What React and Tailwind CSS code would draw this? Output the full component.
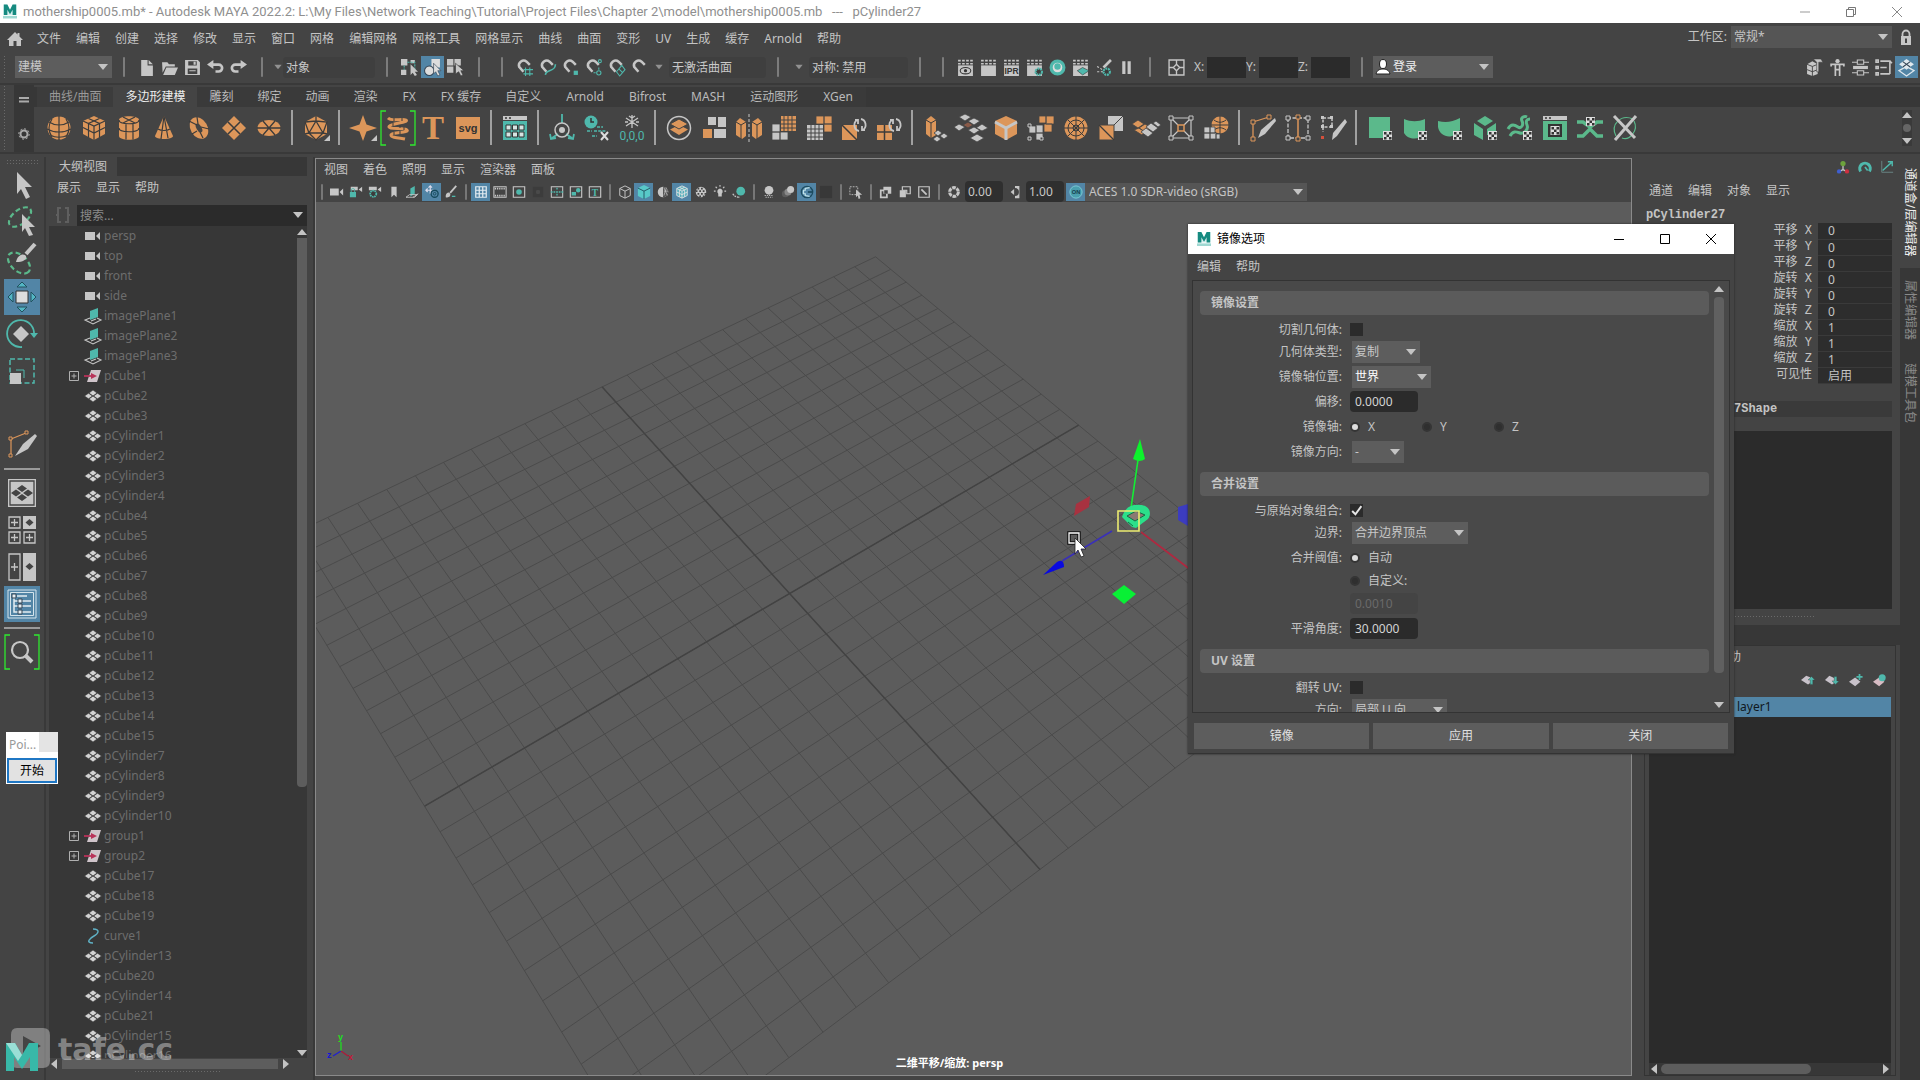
import React from "react";

const O = "#dc965a";
const T = "#4fb8ac";
const W = "#c6c6c6";
const D = "#3b3b3b";
const G = "#5bb98b";

const Magnet = () => (
  <path d="M7 12 L3 7.500 A4.500 4.500 0 0 1 10 2.500 L13 5.500" fill="none" stroke={W} strokeWidth="2.400" />
);
const Clap = () => (
  <>
    <path d="M1 6h14v10H1z" fill={W} />
    <path d="M1 1.500h14M1 4.500h14" stroke={W} strokeWidth="1.500" strokeDasharray="2.500 1.300" />
  </>
);
const Checker = ({ x = 15, y = 15 }) => (
  <g>
    <path d={`M${x} ${y}h9v9h-9z`} fill="#ddd" />
    <path d={`M${x + 1} ${y + 1}h2.500v2.500h-2.500zM${x + 6} ${y + 1}h2.500v2.500h-2.500zM${x + 3.5} ${y + 3.5}h2.500v2.500h-2.500zM${x + 1} ${y + 6}h2.500v2.500h-2.500zM${x + 6} ${y + 6}h2.500v2.500h-2.500z`} fill="#333" />
  </g>
);
const Gear = ({ x, y, r = 3 }) => (
  <circle cx={x} cy={y} r={r} fill={D} stroke={T} strokeWidth="2" strokeDasharray="1.800 .7" />
);

/* 16-unit icons */
const small = {
  home: <path d="M8 1 L0 9h2v6h4.500v-5h3v5H14V9h2L12.500 5.500V2h-2v1.600z" fill={W} />,
  file: <path d="M3 1h6v5h5v10H3zM10 1l4 4h-4z" fill={W} />,
  open: <path d="M1 3h5l1.500 2H13v2H4.500L1.500 13zM5 8h11l-3 7H2z" fill={W} />,
  save: <path fillRule="evenodd" d="M1 1h12l2 2v12H1zM4 2v4h8V2zM3.500 9v5h9V9zM9 2.500h2v3H9zM5 10.500h6v1H5z" fill={W} />,
  undo: <path d="M6 1v3h5a4.500 4.500 0 0 1 0 9H8v-2.500h3a2 2 0 0 0 0-4H6v3L0 5.200z" fill={W} />,
  redo: <path d="M10 1v3H5a4.500 4.500 0 0 0 0 9h3v-2.500H5a2 2 0 0 1 0-4h5v3l6-4.300z" fill={W} />,
  selH: (<><path d="M0 0h6v6H0zM0 10h5v5H0zM9 1h4v3H9z" fill={W} /><path d="M6 3h7v8M3 6v4" stroke={T} strokeDasharray="2 1" fill="none" /><path d="M9 5l7 7h-3l2 3-2 1-2-3-2 2z" fill={W} /></>),
  selO: (<><path d="M7 0h8v8H7z" fill="#ddd" /><circle cx="5" cy="11" r="4.500" fill="#ddd" stroke="#345" /><path d="M9 4l7 7h-3l2 4-2 1-2-4-2 2z" fill="#ddd" stroke="#345" strokeWidth=".6" /></>),
  selC: (<><path d="M0 0h6v6H0zM7 0h6v6H7zM0 7h6v6H0z" fill={W} /><path d="M8 4l8 7h-3l2 4-2 1-2-4-3 2z" fill={W} stroke={D} strokeWidth=".6" /></>),
  mGrid: (<><Magnet /><path d="M9 8v8M13 8v8M7 10h9M7 14h9" stroke={T} /></>),
  mCurve: (<><Magnet /><path d="M6 15c1-6 9-2 9.500-10" stroke={T} strokeWidth="1.500" fill="none" /></>),
  mPoint: (<><Magnet /><path d="M11 11h4v4h-4z" fill={T} /></>),
  mProj: (<><Magnet /><circle cx="14" cy="2" r="1.400" fill="none" stroke={T} /><circle cx="13" cy="13" r="2" fill="none" stroke={T} /><path d="M8 13h2M13 8v2" stroke={T} /></>),
  mPlane: (<><Magnet /><path d="M8 12l5-6 3 4-5 6zM10 9l4 4" stroke={T} fill="none" /></>),
  mLive: <Magnet />,
  rView: (<><Clap /><ellipse cx="8" cy="11" rx="5" ry="3" fill="none" stroke="#333" /><circle cx="8" cy="11" r="1.500" fill="#333" /></>),
  rPlain: <Clap />,
  rIpr: (<><Clap /><text x="8" y="14" fontSize="8" fontWeight="bold" textAnchor="middle" fill="#333" fontFamily="Liberation Sans, sans-serif">IPR</text></>),
  rSet: (<><Clap /><Gear x={12} y={12} /></>),
  rHyp: (<><circle cx="8" cy="8" r="6" fill="#ddd" stroke={T} strokeWidth="3" /><circle cx="8" cy="7" r="3" fill={T} /></>),
  rLay: (<><Clap /><path d="M5 11l5-3 6 3-6 4z" fill={T} stroke={D} strokeWidth=".6" /></>),
  rLight: (<><path d="M15 1L8 8" stroke={W} strokeWidth="2.500" /><path d="M2 7l10 6M2 12h8" stroke={W} strokeDasharray="2 1.500" /><Gear x={11} y={12} /></>),
  pause: <path d="M4 2h3v12H4zM9 2h3v12H9z" fill={W} />,
  snap: <path d="M1 1h14v14H1zM8 1v5M8 10v5M1 8h5M10 8h5M8 5l3 3-3 3-3-3z" fill="none" stroke={W} strokeWidth="1.300" />,
  kit: (<><path d="M1 5l5-3 5 3v9l-5 2-5-2z" fill={W} /><path d="M1 5l5 2 5-2M6 7v9M1 10l5 2 5-2" stroke={D} fill="none" strokeWidth=".8" /><path d="M7 0h7l2 3h-4v9h-2V3z" fill={W} stroke={D} strokeWidth=".5" /></>),
  human: (<><circle cx="8" cy="2" r="2" fill={W} /><path d="M2 7V5h12v2M6 5v5h4V5M6 10v6M10 10v6" stroke={W} fill="none" strokeWidth="1.600" /></>),
  attr: (<><path d="M0 3h5M11 3h5M0 13h5M11 13h5" stroke={W} /><path d="M5 1h6v4H5zM5 11h6v4H5z" fill="none" stroke={W} /><path d="M1 6.500h14v3H1z" fill={W} /></>),
  tool: <path d="M1 1h2v2H1zM1 7h2v2H1zM1 13h2v2H1zM5 2h9v12M5 8h6M5 14h9M8 2h6l2 2" fill="none" stroke={W} strokeWidth="1.500" />,
  chan: (<><path d="M8 7l7 4-7 5-7-5z" fill="none" stroke="#dfe8ee" strokeWidth="1.300" /><path d="M8 0l7 5-7 5-7-5z" fill="#dfe8ee" /><path d="M4.500 2.500l7 5M11.500 2.500l-7 5" stroke="#345" /></>),
  lock: (<><path d="M4.500 8V5a3.500 3.500 0 0 1 7 0v3" fill="none" stroke={W} strokeWidth="1.800" /><path fillRule="evenodd" d="M3 7h10v9H3zM7 9.500h2V14H7z" fill={W} /></>),
  cam: <path d="M0 4h10v8H0zM11 8l4-4v8z" fill={W} />,
  camL: (<><path d="M2 2h8v4H2zM11 5l4-3v6z" fill={W} /><path d="M1 8h7v6H1z" fill={T} /><path d="M2.500 8V6a2 2 0 0 1 4 0v2" stroke={T} fill="none" /></>),
  camA: (<><path d="M1 2h9v4H1zM11 5l4-3v6z" fill={W} /><Gear x={6} y={10} r={3.5} /></>),
  book: <path d="M5 2h6v12l-3-3-3 3z" fill={W} />,
  img: (<><path d="M5 4l5-3v9l-5 3z" fill={T} /><path d="M0 14l4-3h9l-3 3zM8 14l6-4" stroke={W} fill="none" /></>),
  pan: (<><path d="M6 1v9M1 6h11M4 3l2-2 2 2M3 4L1 6l2 2" stroke="#dde" fill="none" strokeWidth="1.300" /><circle cx="11" cy="10" r="4" fill="none" stroke="#164a5c" strokeWidth="1.500" /><circle cx="11" cy="10" r="1.500" fill="none" stroke="#164a5c" /></>),
  brush: (<><path d="M14 1L7 9" stroke={W} strokeWidth="2" /><path d="M2 12c1-4 4-4 5-2s-1 5-5 4z" fill={W} /><path d="M9 13h4" stroke={T} strokeWidth="1.500" /></>),
  grid: <path d="M2 2h12v12H2zM2 6h12M2 10h12M6 2v12M10 2v12" fill="none" stroke="#e4ecf2" strokeWidth="1.400" />,
  film: (<><path d="M1 2h14v12H1z" fill="none" stroke={W} strokeWidth="1.200" /><path d="M2 4h12M2 12h12" stroke={W} strokeWidth="2" strokeDasharray="1.500 1" /></>),
  gate: (<><path d="M1.500 2h13v12h-13z" fill="none" stroke={W} strokeWidth="1.300" /><circle cx="8" cy="8" r="3.200" fill={T} /></>),
  dim: (<><path d="M2 2h12v12H2z" fill="#3c3c3c" /><circle cx="8" cy="8" r="2.500" fill="#4a4a4a" /></>),
  chart: (<><path d="M1.500 2h13v12h-13z" fill="none" stroke={W} strokeWidth="1.200" /><path d="M1 8h14M8 3v3M8 10v3" stroke={T} strokeDasharray="2 1" strokeWidth="1.500" /></>),
  safeA: (<><path d="M1.500 2h13v12h-13z" fill="none" stroke={W} strokeWidth="1.300" /><path d="M3 8h5v4H3z" fill={T} /><circle cx="10.500" cy="6" r="2.500" fill={T} /></>),
  safeT: (<><path d="M1.500 2h13v12h-13z" fill="none" stroke={W} strokeWidth="1.300" /><text x="8" y="12" fontSize="11" fontWeight="bold" textAnchor="middle" fill={T} fontFamily="Liberation Serif, serif">T</text></>),
  wire: <path d="M8 1l6 3v8l-6 3-6-3V4zM2 4l6 3 6-3M8 7v8" fill="none" stroke={W} strokeWidth="1.100" />,
  shade: (<><path d="M8 0l7 3.500v9L8 16l-7-3.500v-9z" fill="#58c8c8" /><path d="M1 3.500l7 3.500 7-3.500M8 7v9" fill="none" stroke="#1f4a5a" /></>),
  half: (<><circle cx="8" cy="8" r="6" fill={W} /><path d="M8 2a6 6 0 0 1 0 12z" fill="#555" /><path d="M9 3l4 9M12 3l-3 9M9 7h5" stroke={W} strokeWidth=".8" /></>),
  wos: (<><path d="M8 1l6 3v8l-6 3-6-3V4z" fill="#53aebb" /><path d="M8 1l6 3v8l-6 3-6-3V4zM2 4l6 3 6-3M8 7v8M5 2.500l6 3v8M11 2.500l-6 3v8M2 8l6 3 6-3" fill="none" stroke="#e2e2e2" /></>),
  check: (<><circle cx="8" cy="8" r="6" fill={W} /><path d="M4 3h2v2H4zM8 3h2v2H8zM2 6h2v2H2zM6 6h2v2H6zM10 6h2v2h-2zM4 9h2v2H4zM8 9h2v2H8zM12 9h2v2h-2zM6 12h2v2H6zM10 12h2v2h-2z" fill="#444" /></>),
  bulb: (<><path d="M8 4a3.500 3.500 0 0 1 2 6v3H6v-3a3.500 3.500 0 0 1 2-6z" fill={W} /><path d="M8 0v2M1 7h2M13 7h2M3 2l1.500 1.500M13 2l-1.500 1.500" stroke={W} strokeWidth="1.300" /></>),
  shad: (<><circle cx="10" cy="7" r="5" fill={T} /><path d="M1 10c2 4 6 4 8 4" stroke={W} strokeWidth="1.500" strokeDasharray="2 1" fill="none" /></>),
  ao: (<><circle cx="8" cy="6" r="5" fill={W} /><path d="M3 12h10M4 14h8" stroke={W} strokeDasharray="1.500 1" /></>),
  blur: (<><circle cx="5" cy="10" r="4" fill="#5c5c5c" /><circle cx="8" cy="8" r="4" fill="#888" /><circle cx="11" cy="5" r="4" fill={W} /></>),
  msaa: (<><circle cx="8" cy="8" r="6.500" fill="none" stroke="#1d4c60" strokeWidth="1.500" /><path d="M11 3L6 4v2H4v4h2v2l5 1" fill="none" stroke="#bfe3ea" strokeWidth="1.400" /><path d="M9 8h5" stroke="#1d4c60" strokeWidth="2" /></>),
  dark: <path d="M1 1h14v14H1z" fill="#383838" />,
  iso: (<><path d="M1 2h9v9H1z" fill="none" stroke={W} strokeDasharray="2 1.300" /><path d="M8 5l7 6h-3l1 4-2 1-1-4-2 2z" fill={W} /></>),
  x1: (<><path d="M5 2h9v8H5z" fill={W} /><path d="M2 6h7v8H2z" fill="none" stroke={W} strokeWidth="2" /><path d="M6 6h4v4H6z" fill="#444" /></>),
  x2: (<><path d="M5 2h9v8h-4V6H5z" fill="none" stroke={W} strokeWidth="1.400" /><path d="M2 6h7v8H2z" fill={W} /></>),
  x3: (<><path d="M2 2h12v12H2z" fill="none" stroke={W} strokeWidth="1.400" /><path d="M5 5l6 6" stroke={W} strokeWidth="2" /></>),
  expo: (<><circle cx="8" cy="8" r="5" fill="none" stroke={W} strokeWidth="3.500" strokeDasharray="4.200 1" /></>),
  gam: (<><path d="M8 1h5v14H8v-2.500a4.500 4.500 0 0 0 0-9zM3 8l4-3.500v7z" fill={W} /></>),
  on: (<><circle cx="8" cy="8" r="7" fill="#4a9fae" stroke="#7ed0d8" /><text x="8" y="10.500" fontSize="6.500" fontWeight="bold" textAnchor="middle" fill="#153c4a" fontFamily="Liberation Sans, sans-serif">ON</text></>),
  manip: (<><path d="M8 6v5M8 11l-4 2M8 11l4 2" stroke={W} strokeWidth="1.500" /><circle cx="8" cy="4" r="3" fill="#6da23c" /><circle cx="3.500" cy="13" r="2.500" fill="#3f5fd0" /><circle cx="12.500" cy="13" r="2.500" fill="#cc3040" /></>),
  speed: (<><path d="M3 13a6 6 0 1 1 10 0" fill="none" stroke={T} strokeWidth="3.500" /><path d="M8 8l3 4" stroke={T} strokeWidth="2" /></>),
  hyper: (<><path d="M2 1v13h13" stroke="#6d8a8a" fill="none" /><path d="M3 12L13 3M9 2h5v5" stroke={T} strokeWidth="1.600" fill="none" /></>),
  lUp: (<><path d="M0 8l6-5 5 2v6l-3 2z" fill="#c8c2ca" /><path d="M12 4l4 4h-2.500v5h-3V8H8z" fill={T} stroke={D} strokeWidth=".4" /></>),
  lDn: (<><path d="M0 8l5-5 6 3v5l-3 2z" fill="#c8c2ca" /><path d="M12 13l4-4h-2.500V4h-3v5H8z" fill={T} stroke={D} strokeWidth=".4" /></>),
  lNew: (<><path d="M0 10l7-5 6 5-6 5z" fill="#c8c2ca" /><path d="M12 1v7M8.500 4.500h7" stroke={T} strokeWidth="2" /></>),
  lSel: (<><path d="M0 10l7-5 6 5-6 5z" fill="#d8bcc4" /><circle cx="10.500" cy="5.500" r="4" fill={T} /></>),
  mesh: (<><path d="M8 2l4 3-4 3-4-3zM8 8l4 3-4 3-4-3zM3.500 5.200L7.500 8l-4 2.800L-.5 8zM12.500 5.200l4 2.800-4 2.800-4-2.800z" fill="#d2d2d2" stroke="#373737" strokeWidth=".6" /></>),
  plane: (<><path d="M5 3l8-3v9l-8 3z" fill={T} /><path d="M5 10l-5 2 8 4 8-4-4-2M6 13l5-2" stroke={W} fill="none" strokeWidth="1.100" /></>),
  group: (<><path d="M6 2h10l-4 12H2z" fill="#cfc4ca" /><path d="M-1 8h8" stroke="#b8335a" strokeWidth="1.800" /><path d="M6 5l6 3-6 3z" fill="#b8335a" /></>),
  curve: <path d="M8 1c8 0 5 5 1 7S0 15 8 15" fill="none" stroke="#5fb0c4" strokeWidth="1.500" />,
};

const Sq = ({ d, f = W }) => <path d={d} fill={f} stroke="#444" strokeWidth=".8" />;
const Cycle = () => (
  <path d="M17 15a5.500 6 0 0 1-2-11M19 3a5.500 6 0 0 1 2 11M13 4h3v4M23 14h-3v-4" fill="none" stroke={W} strokeWidth="1.800" />
);

/* 24-unit shelf icons */
const shelf = {
  sphere: (<><circle cx="12" cy="12" r="11.500" fill={O} /><path d="M12 0v24M5 3c-4 6-4 12 0 18M19 3c4 6 4 12 0 18M2 6c6 4 14 4 20 0M0 13c7 4 17 4 24 0M3 19c6 3 12 3 18 0" fill="none" stroke={D} strokeWidth="1.200" /></>),
  cube: (<><path d="M12 0l11 5v13l-11 6L1 18V5z" fill={O} /><path d="M1 5l11 5 11-5M12 10v14M1 11.500L12 17l11-5.500M6.500 2.500l11 5v14M17.500 2.500l-11 5v14" fill="none" stroke={D} strokeWidth="1.200" /></>),
  cyl: (<><path d="M2 4c0-5 20-5 20 0v16c0 5-20 5-20 0z" fill={O} /><path d="M2 4c0 5 20 5 20 0M2 12c0 5 20 5 20 0M9 7.500v16M16 7.500v16M6 1l12 6M18 1L6 7" fill="none" stroke={D} strokeWidth="1.200" /></>),
  cone: (<><path d="M12 0l9 20c0 4-18 4-18 0z" fill={O} /><path d="M12 0l-3 23M12 0l4 22M6 13c3 2 9 2 12 0" fill="none" stroke={D} strokeWidth="1.200" /></>),
  torus: (<><ellipse cx="12" cy="12" rx="8.500" ry="11.500" fill={O} transform="rotate(-30 12 12)" /><ellipse cx="12" cy="12" rx="2.500" ry="5" fill="#444" transform="rotate(-30 12 12)" /><path d="M2 5l8 4M5 18l5-3M16 22l-3-6M22 13l-8-2M10 1l1 7" stroke={D} strokeWidth="1.200" /></>),
  plane: (<><path d="M12 0l12 12-12 12L0 12z" fill={O} /><path d="M6 6l12 12M18 6L6 18" stroke={D} strokeWidth="1.500" /></>),
  disc: (<><ellipse cx="12" cy="12" rx="11.500" ry="8" fill={O} /><path d="M0 12h24M6 5l12 14M18 5L6 19" stroke={D} strokeWidth="1.300" /></>),
  plato: (<><path d="M12 0l11 6v12l-11 6L1 18V6z" fill={O} /><path d="M12 0v5M12 5l7 12H5zM1 6l11-1 11 1-4 11 4 1M1 6l4 11-4 1M5 17l7 7 7-7" fill="none" stroke={D} strokeWidth="1.300" /><path d="M26 19v6h-6z" fill={W} /></>),
  star: (<><path d="M12-1l3.500 9.500L26 12l-10.500 3.500L12 25l-3.500-9.500L-2 12l10.500-3.500z" fill={O} /><path d="M26 19v6h-6z" fill={W} /></>),
  helix: (<><path d="M2 2c4 4 14 0 18 2S2 8 3 11s15 0 18 3-16 2-16 5 10 3 14 4" fill="none" stroke={O} strokeWidth="3" /><path d="M8 2v3M16 2v3M7 7v3M14 9v3M18 11v3M8 16v3M14 15v3" stroke={D} /><path d="M0-5h-5v34h5M24-5h5v34h-5" fill="none" stroke="#2fe82f" strokeWidth="1.300" /></>),
  type: <text x="12" y="23" fontSize="33" fontWeight="bold" textAnchor="middle" fill={O} fontFamily="Liberation Serif, serif">T</text>,
  svg: (<><path d="M0 1h24v22H0z" fill={O} /><text x="12" y="16" fontSize="11" fontWeight="bold" textAnchor="middle" fill="#333" fontFamily="Liberation Sans, sans-serif">svg</text></>),
  table: (<><path d="M0 0h24v4H0z" fill={W} /><path d="M2 2h2M6 2h2" stroke="#333" strokeWidth="1.500" /><path d="M0 5h24v19H0z" fill={T} /><path d="M3 9h5v5H3zM9.500 9h5v5h-5zM16 9h5v5h-5zM3 16h5v5H3zM9.500 16h5v5h-5zM16 16h5v5h-5z" fill="#d6e4e2" stroke="#333" strokeWidth="1" /></>),
  pivot: (<><path d="M12-2v9M8 18l-6 4M16 18l6 4M0 18l1 5 5-1M24 18l-1 5-5-1" stroke={T} strokeWidth="1.800" fill="none" /><circle cx="12" cy="14" r="7" fill="none" stroke={W} strokeWidth="1.500" /><circle cx="12" cy="14" r="3" fill={W} /></>),
  hist: (<><circle cx="6" cy="6" r="6.500" fill={T} /><path d="M6 2v4h3" stroke="#333" strokeWidth="1.500" fill="none" /><path d="M9 15h12M2 15h5M12 11h6M7 20h5" stroke={T} strokeWidth="1.500" strokeDasharray="3 1.200" /><path d="M16 16l7 8M23 16l-7 8" stroke="#ddd" strokeWidth="2" /></>),
  freeze: (<><path d="M12-1v13M6 2l12 8M18 2L6 10M9 0l3 2 3-2M5 6h3M16 6h3" stroke={W} strokeWidth="1.300" fill="none" /><text x="12" y="24" fontSize="12" textAnchor="middle" fill={T} fontFamily="Roboto, sans-serif">0,0,0</text></>),
  combine: (<><circle cx="12" cy="12" r="11.500" fill="none" stroke={W} strokeWidth="1.500" /><path d="M12 9l9 4.500-9 5.500-9-5.500z" fill={O} /><path d="M12 3l9 5-9 5-9-5z" fill={O} stroke="#444" /></>),
  separate: (<><path d="M6 1h8v8H6zM16 1h8v10h-8zM12 13h12v9H12z" fill={W} /><path d="M1 13h9v9H1z" fill={O} /></>),
  mirror: (<><path d="M-1 6l4-4 6 4v14l-4 3-6-4zM25 6l-4-4-6 4v14l4 3 6-4z" fill={O} /><path d="M-1 6l5 3 5-3M4 9v14M25 6l-5 3-5-3M20 9v14" stroke={D} fill="none" /><path d="M12-2v28" stroke={W} strokeDasharray="3 2" /></>),
  fill1: (<><path d="M9 0h15v15H9z" fill={O} /><path d="M12 0v15M16 0v15M20 0v15M9 4h15M9 8h15M9 12h15" stroke="#444" /><Sq d="M0 8h8v8H0zM0 16h8v8H0zM8 16h8v8H8z" /></>),
  fill2: (<><Sq f={O} d="M9 0h8v8H9zM17 0h8v8h-8zM17 8h8v8h-8z" /><path d="M0 9h16v15H0z" fill={W} /><path d="M4 9v15M8 9v15M12 9v15M0 13h16M0 17h16M0 21h16" stroke="#444" /></>),
  spin: (<><path d="M0 9h15v15H0z" fill={O} /><path d="M0 9l15 15" stroke={D} strokeWidth="1.500" /><Cycle /></>),
  conn: (<><path d="M0 9h15v15H0z" fill={O} /><path d="M7.500 9v15M0 16h15" stroke={D} strokeWidth="1.500" /><Cycle /></>),
  extr: (<><path d="M2 4l5-4 5 4v15l-5 3-5-4z" fill={O} /><path d="M2 4l5 3 5-3M7 7v15" stroke={D} fill="none" /><Sq d="M14 14l4 3-4 3-4-3zM20 17l4 3-4 3-4-3zM13 20l4 3-4 3-4-3z" /></>),
  bridge: (<><Sq d="M6-2l6 3-6 4-6-4zM0 8l6 3-6 4-5-4zM15 2l6 3-6 4-6-4zM15 11l6 3-6 4-6-4zM23 8l6 4-6 3-6-3zM18 18l7 4-7 4-7-4z" /><Sq f="#8a5a48" d="M9 6l5 3-5 3-5-3z" /></>),
  bevel: (<><path d="M12 0l11 5v13l-11 6L1 18V5z" fill={O} /><path d="M1 6l11 6 11-6M12 12v12" stroke={W} strokeWidth="3" fill="none" /></>),
  collapse: (<><Sq f={O} d="M10 0h7v7h-7zM17 0h8v8h-8zM15 8h8v8h-8z" /><Sq d="M0 10h7v7H0zM7 9h7v8H7zM7 17h7v7H7z" /><path d="M-1 8h3v3h-3zM-1 21h3v3h-3zM11 21h3v3h-3z" fill="#444" stroke={W} /></>),
  circ: (<><circle cx="12" cy="12" r="11.500" fill={O} /><circle cx="12" cy="12" r="8" fill="none" stroke={D} /><circle cx="12" cy="12" r="3" fill="none" stroke={D} /><path d="M12 0v24M0 12h24M4 4l16 16M20 4L4 20" stroke={D} /></>),
  extract: (<><path d="M9 0h15v15H9z" fill={W} /><path d="M9 15L24 0" stroke="#444" /><path d="M0 9h15v15H0z" fill={O} stroke="#444" /><path d="M0 9l15 15" stroke={D} strokeWidth="1.300" /></>),
  detach: (<><Sq f={O} d="M4 4l6 4-6 4-6-4zM11 8l6 4-6 4-6-4zM5 12l6 4-3 3-8-5z" /><Sq d="M17 7l7 5-5 4-7-5zM12 12l7 5-5 4-7-5zM22 5l5 4-3 2-5-4z" /></>),
  lattice: (<><path d="M2 2h20v20H2zM2 2l7 7M22 2l-7 7M2 22l7-7M22 22l-7-7" fill="none" stroke={W} strokeWidth="1.200" /><path d="M9 9h6v6H9z" fill="none" stroke={O} strokeWidth="1.500" /><path d="M0 0h4v4H0zM20 0h4v4h-4zM0 20h4v4H0zM20 20h4v4h-4z" fill="#444" stroke={W} /></>),
  smooth: (<><circle cx="16" cy="9" r="8.500" fill={O} /><path d="M16 0v18M7 9h18M10 4c4 3 8 3 12 0M10 14c4-3 8-3 12 0" stroke={D} fill="none" /><Sq d="M0 11h6v6H0zM0 17h6v6H0zM6 17h6v6H6zM6 11h5v6H6zM12 18h4v5h-4z" /></>),
  cut: (<><path d="M2 6L18 1M2 6v16" stroke={O} strokeWidth="1.300" /><path d="M24 2l1 3L14 18l-7 4 3-8z" fill={W} /><path d="M0 4h4v4H0zM16-1h4v4h-4zM0 21h4v4H0z" fill="#444" stroke={O} /></>),
  loop: (<><path d="M2 2v20h20V2z" fill="none" stroke={W} strokeDasharray="4 1.500" strokeWidth="1.300" /><path d="M12 2v20" stroke={O} strokeWidth="1.500" /><path d="M0 0h4v4H0zM20 0h4v4h-4zM0 20h4v4H0zM20 20h4v4h-4z" fill="#444" stroke={W} /><path d="M10-1h4v4h-4zM10 21h4v4h-4z" fill="#444" stroke={O} /></>),
  quad: (<><path d="M2 2h9v9H2zM2 11v5" fill="none" stroke={W} strokeDasharray="3 1.500" strokeWidth="1.500" /><path d="M0 0h3v3H0zM9 0h3v3H9zM9 9h3v3H9zM0 9h3v3H0z" fill={W} /><path d="M0 20h3v3H0z" fill="#d4503c" /><path d="M24 3l2 3-10 14-5 4 1-7z" fill={W} /></>),
  uv1: (<><path d="M1 1h21v21H1z" fill={G} /><Checker /></>),
  uv2: (<><path d="M1 3c7 3 14 3 21 0v16c-7 5-17 5-21-2z" fill={G} /><Checker /></>),
  uv3: (<><path d="M0 5c8 2 14 1 22-3v12c-6 10-20 8-22-3z" fill={G} /><Checker /></>),
  uv4: (<><path d="M12 0l8 5-8 5-8-5zM1 7l9 6v11l-9-5zM23 7l-9 6v6h9z" fill={G} /><Checker /></>),
  uv5: (<><path d="M0 13c3-6 7-4 10-2s6-2 4-6 3-5 5-4M2 20c3-6 7-4 10-3s9-3 7-8 1-6 3-6" fill="none" stroke={G} strokeWidth="3" /><Checker /></>),
  uv6: (<><path d="M0 0h24v4H0z" fill={W} /><path d="M2 2h2M6 2h2" stroke="#333" strokeWidth="1.500" /><path d="M0 5h24v19H0z" fill={G} /><path d="M5 8h14v13H5z" fill="#333" /><Checker x={7.5} y={10} /></>),
  uv7: (<><path d="M-1 6h6l7 5 7-5h6M-1 20h6l7-7 7 7h6" fill="none" stroke={G} strokeWidth="3.500" /><Checker x={8} y={1} /></>),
  uv8: (<><path d="M3 20C-3 8 8-2 20 3M21 5c5 10-5 20-12 17" fill="none" stroke={G} strokeWidth="1.200" /><path d="M1 0l21 22M23 0L2 24" stroke={W} strokeWidth="3" /></>),
};

const Tri = ({ dir = "down", className = "" }) => {
  const d = { down: "M0 2h10L5 8z", up: "M0 8h10L5 2z", left: "M8 0v10L2 5z", right: "M2 0v10l6-5z" }[dir];
  return (
    <svg viewBox="0 0 10 10" className={`h-2.5 w-2.5 shrink-0 ${className}`} aria-hidden="true">
      <path d={d} fill="#c4c4c4" />
    </svg>
  );
};

const I16 = ({ n, className = "h-4 w-4" }) => (
  <svg viewBox="0 0 16 16" className={`shrink-0 overflow-visible ${className}`} aria-hidden="true">{small[n]}</svg>
);

const Maya = ({ className }) => (
  <svg viewBox="0 0 16 16" className={className} aria-hidden="true">
    <path d="M0 0h5l3 7 3-7h5v12H0z" fill="#d7efee" />
    <path d="M1 0h4l3 6 3-6h4v12h-4V6l-3 5-3-5v6H1z" fill="#168a80" />
    <path d="M0 13h16v3H0z" fill="#9fd8d2" />
  </svg>
);

const Sel = ({ options, label, className = "", text = "text-[#c8c8c8]" }) => (
  <div className={`relative flex h-[22px] shrink-0 items-center bg-[#5d5d5d] ${className}`}>
    <select aria-label={label} className={`h-full w-full appearance-none bg-transparent pl-[3px] text-xs outline-none ${text}`}>
      {options.map((o) => <option key={o}>{o}</option>)}
    </select>
    <div className="pointer-events-none absolute right-1 flex h-full items-center">
      <Tri />
    </div>
  </div>
);

const StatusBtn = ({ n, on }) => (
  <button aria-label={n} className={`flex h-[22px] w-[23px] shrink-0 items-center justify-center ${on ? "bg-[#5285a6]" : ""}`}>
    <I16 n={n} className="h-[17px] w-[17px]" />
  </button>
);
const StatusSep = () => (
  <div className="flex w-[23px] shrink-0 justify-center"><div className="h-5 w-0.5 rounded-full bg-[#7c7c7c]" /></div>
);
const MiniTri = ({ className }) => (
  <div className={`flex shrink-0 justify-center ${className}`}><Tri className="scale-75 opacity-60" /></div>
);
const Field = ({ v = "", label, className = "" }) => (
  <input aria-label={label} defaultValue={v} className={`h-[21px] min-w-0 shrink-0 rounded-sm px-[3px] text-xs text-[#c8c8c8] outline-none ${className}`} />
);

const Title = () => (
  <header className="flex h-[23px] shrink-0 items-center bg-white text-[#8f8f8f]">
    <Maya className="ml-[3px] h-[15px] w-[14px]" />
    <h1 className="ml-1.5 whitespace-pre font-['Roboto','Noto_Sans',sans-serif] text-[13px] leading-[23px]">
      {"mothership0005.mb* - Autodesk MAYA 2022.2: L:\\My Files\\Network Teaching\\Tutorial\\Project Files\\Chapter 2\\model\\mothership0005.mb   ---   pCylinder27"}
    </h1>
    <div className="ml-auto flex h-full">
      <button aria-label="最小化" className="flex w-[46px] items-center justify-center"><svg viewBox="0 0 10 10" className="h-2.5 w-2.5"><path d="M0 5h10" stroke="#999" /></svg></button>
      <button aria-label="还原" className="flex w-[46px] items-center justify-center"><svg viewBox="0 0 10 10" className="h-2.5 w-2.5"><path d="M.5 2.500h7v7h-7zM2.500 2.500v-2h7v7h-2" fill="none" stroke="#777" /></svg></button>
      <button aria-label="关闭窗口" className="flex w-[46px] items-center justify-center"><svg viewBox="0 0 10 10" className="h-2.5 w-2.5"><path d="M0 0l10 10M10 0L0 10" stroke="#888" /></svg></button>
    </div>
  </header>
);

const MENUS = ["文件", "编辑", "创建", "选择", "修改", "显示", "窗口", "网格", "编辑网格", "网格工具", "网格显示", "曲线", "曲面", "变形", "UV", "生成", "缓存", "Arnold", "帮助"];
const MenuBar = () => (
  <nav className="flex h-[31px] shrink-0 items-center gap-[15px] pl-[7px]">
    <button aria-label="主页" className="-mr-[1px]"><I16 n="home" /></button>
    {MENUS.map((m) => <button key={m} className="shrink-0 text-xs">{m}</button>)}
    <div className="ml-auto flex items-center pr-1.5 pb-1">
      <label className="mr-1 text-xs" htmlFor="ws">工作区:</label>
      <div className="relative flex h-[22px] w-[161px] items-center bg-[#555]">
        <select id="ws" className="h-full w-full appearance-none bg-transparent pl-[3px] text-xs outline-none"><option>常规*</option></select>
        <Tri className="pointer-events-none absolute right-1" />
      </div>
      <button aria-label="锁定" className="ml-1.5"><I16 n="lock" /></button>
    </div>
  </nav>
);

const Grip = ({ className }) => (
  <div className={`shrink-0 bg-[radial-gradient(#6a6a6a_1px,transparent_1px)] bg-[size:3px_3px] ${className}`} />
);

const StatusLine = () => (
  <div className="flex h-[26px] shrink-0 items-center">
    <Grip className="ml-[3px] mr-2 h-6 w-1" />
    <Sel label="菜单集" options={["建模"]} className="w-[97px]" />
    <StatusSep />
    {["file", "open", "save", "undo", "redo"].map((n) => <StatusBtn key={n} n={n} />)}
    <StatusSep />
    <MiniTri className="w-2.5" />
    <Field label="选择模式" v="对象" className="w-[92px] bg-[#3f3f3f]" />
    <StatusSep />
    <StatusBtn n="selH" /><StatusBtn n="selO" on /><StatusBtn n="selC" />
    <StatusSep /><StatusSep />
    {["mGrid", "mCurve", "mPoint", "mProj", "mPlane", "mLive"].map((n) => <StatusBtn key={n} n={n} />)}
    <MiniTri className="w-4" />
    <Field label="激活曲面" v="无激活曲面" className="ml-0.5 w-[97px] bg-[#3f3f3f]" />
    <StatusSep />
    <MiniTri className="w-5" />
    <Field label="对称" v="对称: 禁用" className="w-[99px] bg-[#3f3f3f]" />
    <StatusSep /><StatusSep />
    {["rView", "rPlain", "rIpr", "rSet", "rHyp", "rLay", "rLight", "pause"].map((n) => <StatusBtn key={n} n={n} />)}
    <StatusSep />
    <div className="ml-1 flex"><StatusBtn n="snap" /></div>
    {["X:", "Y:", "Z:"].map((a, i) => (
      <label key={a} className={`flex items-center text-xs ${i ? "" : "ml-1.5"}`}>
        <span className="w-[13px]">{a}</span>
        <input className="h-[21px] w-[39px] bg-[#2b2b2b] outline-none" />
      </label>
    ))}
    <StatusSep />
    <div className="relative flex h-[22px] w-[120px] shrink-0 items-center bg-[#5d5d5d]">
      <svg viewBox="0 0 16 16" className="ml-0.5 h-4 w-4" aria-hidden="true"><ellipse cx="8" cy="5" rx="3.500" ry="4.500" fill="#fff" stroke="#222" /><path d="M1 15c1-4 4-5 7-5s6 1 7 5z" fill="#fff" stroke="#222" /></svg>
      <select aria-label="账户" className="h-full grow appearance-none bg-transparent pl-0.5 text-xs text-[#eee] outline-none"><option>登录</option></select>
      <Tri className="pointer-events-none absolute right-1" />
    </div>
    <div className="ml-auto flex pr-0.5">
      <StatusBtn n="kit" /><StatusBtn n="human" /><StatusBtn n="attr" /><StatusBtn n="tool" /><StatusBtn n="chan" on />
    </div>
  </div>
);

const TABS = ["曲线/曲面", "多边形建模", "雕刻", "绑定", "动画", "渲染", "FX", "FX 缓存", "自定义", "Arnold", "Bifrost", "MASH", "运动图形", "XGen"];
const SHELF = ["sphere", "cube", "cyl", "cone", "torus", "plane", "disc", "|", "plato", "|", "star", "helix", "type", "svg", "|", "table", "|", "pivot", "hist", "freeze", "|", "combine", "separate", "mirror", "fill1", "fill2", "spin", "conn", "|", "extr", "bridge", "bevel", "collapse", "circ", "extract", "detach", "lattice", "smooth", "|", "cut", "loop", "quad", "|", "uv1", "uv2", "uv3", "uv4", "uv5", "uv6", "uv7", "uv8"];
const Shelf = () => (
  <div className="mt-[3px] flex h-[71px] shrink-0 border-y-2 border-[#393939]">
    <Grip className="ml-[3px] mr-[7px] h-full w-1" />
    <div className="flex w-5 shrink-0 flex-col items-center bg-[#373737] pt-3">
      <button aria-label="工具架菜单"><svg viewBox="0 0 10 6" className="block h-1.5 w-2.5"><path d="M0 1h10M0 4.500h10" stroke="#aaa" strokeWidth="1.800" /></svg></button>
      <button aria-label="工具架设置" className="mt-[25px]"><svg viewBox="0 0 12 12" className="block h-3 w-3"><circle cx="6" cy="6" r="3.500" fill="none" stroke="#aaa" strokeWidth="2" /><circle cx="6" cy="6" r="5.200" fill="none" stroke="#aaa" strokeDasharray="2 2" /></svg></button>
    </div>
    <div className="flex min-w-0 grow flex-col pt-0.5">
      <div className="flex h-5 shrink-0 bg-[#373737] pl-[3px]">
        {TABS.map((t, i) => (
          <button key={t} className={`shrink-0 text-xs leading-5 ${["FX", "Arnold", "MASH", "XGen"].includes(t) ? "px-[13px]" : "px-3"} ${i === 1 ? "bg-[#444] text-[#eee]" : i ? "bg-[#3a3a3a] text-[#bbb]" : "bg-[#3c3c3c] text-[#999]"}`}>{t}</button>
        ))}
      </div>
      <div className="flex grow items-center pb-1 pl-[7px]">
        {SHELF.map((n, i) => n === "|"
          ? <div key={i} className="flex w-3 shrink-0 justify-center"><div className="h-[35px] w-0.5 bg-[#a0a0a0]" /></div>
          : <button key={i} aria-label={n} className="flex w-[35px] shrink-0 justify-center"><svg viewBox="0 0 24 24" className="h-6 w-6 overflow-visible">{shelf[n]}</svg></button>)}
        <div className="mr-2 ml-auto flex flex-col items-center gap-1 bg-[#3a3a3a]">
          <Tri dir="up" /><div className="h-2 w-2 rounded-full bg-[#666]" /><Tri />
        </div>
      </div>
    </div>
  </div>
);

const TOOLS = [
  ["select", <path d="M13 4l15 15h-7l5 10-4 2-5-10-4 5z" fill={W} />],
  ["lasso", <><ellipse cx="16" cy="12" rx="13" ry="7" transform="rotate(-38 16 12)" fill="none" stroke={G} strokeWidth="2.200" strokeDasharray="5 3" /><path d="M18 9l13 13h-6l4 8-4 1-4-8-3 4z" fill={W} /></>],
  ["paint", <><ellipse cx="15" cy="21" rx="13" ry="8" transform="rotate(42 15 21)" fill="none" stroke={G} strokeWidth="2.200" strokeDasharray="5 3" /><path d="M31 2L22 12" stroke={W} strokeWidth="4" /><path d="M12 20c1-6 6-9 9-7s1 7-9 7z" fill={W} /></>],
  ["move", <><path d="M12 12h12v12H12z" fill="#ddd" stroke="#333" /><path d="M18 3l5 5H13zM18 33l5-5H13zM4 18l5-5v10zM32 18l-5-5v10z" fill="#53b6c4" stroke="#22515f" /></>],
  ["rotate", <><path d="M18 31A13.500 13.500 0 1 1 30 19" fill="none" stroke={T} strokeWidth="1.800" /><path d="M26 17h8l-4 5z" fill={T} /><path d="M17 10l8 8-8 8-8-8z" fill={W} /></>],
  ["scale", <><path d="M6 6h24v24H6z" fill="none" stroke={T} strokeWidth="1.500" strokeDasharray="5 2.500" /><path d="M12 17h8v8" fill="none" stroke={T} /><path d="M6 20h11v11H6z" fill={W} /></>],
];
const LAYOUTS = [
  ["single", false, <><path d="M4 4h28v28H4z" fill={W} /><path d="M6 6h24v24H6z" fill="none" stroke="#444" strokeWidth="1.300" /><path d="M18 10l5 3.500-5 3.500-5-3.500zM18 19l5 3.500-5 3.500-5-3.500zM12 14.500l5 3.500-5 3.500-5-3.500zM24 14.500l5 3.500-5 3.500-5-3.500z" fill="#444" /></>],
  ["four", false, <><path d="M5 5h11v11H5zM5 20h11v11H5zM20 20h11v11H20zM10.500 7v7M7 10.500h7M10.500 22v7M7 25.500h7M25.500 22v7M22 25.500h7" fill="none" stroke={W} strokeWidth="1.300" /><path d="M19 4h13v13H19z" fill={W} /><path d="M25.500 7l4 3.500-4 3.500-4-3.500z" fill="#444" /></>],
  ["two", false, <><path d="M5 5h11v26H5zM10.500 14v8M7 18h7" fill="none" stroke={W} strokeWidth="1.300" /><path d="M19 4h13v28H19z" fill={W} /><path d="M25.500 14l4 3.500-4 3.500-4-3.500z" fill="#444" /></>],
  ["outliner", true, <><path d="M4 4h28v28H4zM6.500 6.500h23v23h-23z" fill="none" stroke="#d5e4ec" /><path d="M10 10v16h4M10 15h4M10 20h4M13 10h10M17 15h10M17 20h10M17 26h10" fill="none" stroke="#e4edf2" strokeWidth="1.500" /><path d="M8 8h4v4H8zM14 13h4v4h-4zM14 18h4v4h-4zM14 24h4v4h-4z" fill="#e4edf2" stroke="#345" /></>],
];
const Tool = ({ name, on, children }) => (
  <button aria-label={name} className={`flex h-9 w-9 shrink-0 ${on ? "bg-[#5285a6]" : ""}`}>
    <svg viewBox="0 0 36 36" className="h-9 w-9">{children}</svg>
  </button>
);
const ToolBox = () => (
  <aside className="flex w-[46px] shrink-0 flex-col items-center gap-px border-r-2 border-[#393939]">
    <Grip className="mt-0.5 mb-0.5 h-1.5 w-8" />
    {TOOLS.map(([n, c]) => <Tool key={n} name={n} on={n === "move"}>{c}</Tool>)}
    <div className="h-9 shrink-0" />
    <Tool name="quad draw"><path d="M7 12L22 6M7 12v17" stroke={O} strokeWidth="1.200" /><path d="M31 7l2 2-9 13-13 7 8-12z" fill={W} /><path d="M5 10h3v3H5zM21 4h3v3h-3zM5 27h3v3H5z" fill="#444" stroke={O} /></Tool>
    <div className="my-1 h-0.5 w-9 shrink-0 bg-[#9a9a9a]" />
    {LAYOUTS.map(([n, on, c]) => <Tool key={n} name={n} on={on}>{c}</Tool>)}
    <div className="my-1 h-0.5 w-9 shrink-0 bg-[#9a9a9a]" />
    <Tool name="search"><path d="M6 1H1v34h5M30 1h5v34h-5" fill="none" stroke="#2fe82f" strokeWidth="1.300" /><circle cx="16" cy="16" r="8" fill="none" stroke={W} strokeWidth="2.200" /><path d="M21 21l7 7" stroke={W} strokeWidth="4" /></Tool>
  </aside>
);

const NODES = ["c:persp", "c:top", "c:front", "c:side", "i:imagePlane1", "i:imagePlane2", "i:imagePlane3", "g:pCube1", "pCube2", "pCube3", "pCylinder1", "pCylinder2", "pCylinder3", "pCylinder4", "pCube4", "pCube5", "pCube6", "pCube7", "pCube8", "pCube9", "pCube10", "pCube11", "pCube12", "pCube13", "pCube14", "pCube15", "pCylinder7", "pCylinder8", "pCylinder9", "pCylinder10", "g:group1", "g:group2", "pCube17", "pCube18", "pCube19", "v:curve1", "pCylinder13", "pCube20", "pCylinder14", "pCube21", "pCylinder15", "pCylinder16"];
const KIND = { c: "cam", i: "plane", g: "group", v: "curve" };
const Outliner = () => (
  <section className="flex w-[269px] shrink-0 flex-col border-r-2 border-[#393939] pr-1.5 pl-[3px]">
    <div className="flex h-[19px] shrink-0 bg-[#373737]">
      <button className="bg-[#444] px-2.5 text-xs leading-[18px]">大纲视图</button>
    </div>
    <div className="mb-1 flex h-6 shrink-0 items-center gap-[15px] pl-2 text-xs">
      <button>展示</button><button>显示</button><button>帮助</button>
    </div>
    <div className="flex h-[22px] shrink-0 items-center">
      <div className="flex w-7 justify-center"><svg viewBox="0 0 16 16" className="h-4 w-4"><path d="M6 1H3v14h3M10 1h3v14h-3M1 8h3M12 8h3" fill="none" stroke="#5f5f5f" strokeWidth="2" /></svg></div>
      <div className="relative flex h-[21px] grow items-center bg-[#2b2b2b]">
        <input aria-label="搜索" placeholder="搜索..." className="h-full w-full bg-transparent pl-[3px] text-xs outline-none placeholder:text-[#8a8a8a]" />
        <Tri className="pointer-events-none absolute right-1" />
      </div>
    </div>
    <div className="flex min-h-0 grow bg-[#373737]">
      <ul className="flex min-w-0 grow flex-col overflow-hidden">
        {NODES.map((s) => {
          const k = s[1] === ":" ? s[0] : "";
          const name = k ? s.slice(2) : s;
          return (
            <li key={s} className="flex h-5 shrink-0 items-center text-[#6d6d6d]">
              <div className="flex w-9 justify-end pr-1.5">
                {k === "g" && <svg viewBox="0 0 10 10" className="h-2.5 w-2.5"><path d="M.5.5h9v9h-9zM2.500 5h5M5 2.500v5" fill="none" stroke="#b0b0b0" /></svg>}
              </div>
              <I16 n={k ? KIND[k] : "mesh"} />
              <span className="ml-[3px] text-xs">{name}</span>
            </li>
          );
        })}
      </ul>
      <div className="flex w-2.5 shrink-0 flex-col items-center">
        <Tri dir="up" className="my-[1px]" />
        <div className="h-[66%] w-2.5 rounded-b bg-[#5d5d5d]" />
        <Tri className="mt-auto" />
      </div>
    </div>
    <div className="flex h-3 shrink-0 items-center gap-[3px] pr-4">
      <Tri dir="left" /><div className="h-2.5 grow bg-[#5d5d5d]" /><Tri dir="right" />
    </div>
    <div className="flex h-2.5 shrink-0 justify-center"><Grip className="h-1 w-[88px]" /></div>
  </section>
);

/* Perspective floor grid: floor (u, v) in [-1, 1] to viewport pixels. */
const at = (u, v) => {
  const w = 1 - 0.1435 * u - 0.1165 * v;
  return [(789.7 + 101.1 * u - 414.6 * v) / w - 316, (593.5 + 151.1 * u + 118.8 * v) / w - 202];
};
const line = (a, b) => `M${a[0].toFixed(1)} ${a[1].toFixed(1)}L${b[0].toFixed(1)} ${b[1].toFixed(1)}`;
const steps = Array.from({ length: 25 }, (_, i) => (i - 12) / 12);
const gridPath = steps.map((s) => line(at(s, -1), at(s, 1)) + line(at(-1, s), at(1, s))).join("");
const axisPath = line(at(0, -1), at(0, 1)) + line(at(-1, 0), at(1, 0));

const Scene = () => (
  <svg className="absolute inset-0 h-full w-full" aria-hidden="true">
    <path d={gridPath} stroke="#4b4b4b" fill="none" />
    <path d={axisPath} stroke="#434343" strokeWidth="1.500" fill="none" />
    <g transform="translate(-316 -202)">
      <path d="M1131 508L1138 460" stroke="#12f034" strokeWidth="1.600" />
      <path d="M1140 439l5 20q-5 4-12 0z" fill="#0df22c" />
      <path d="M1112 531L1062 561" stroke="#3a30b8" strokeWidth="1.600" />
      <path d="M1043 575l14-13q7-4 7 5z" fill="#0a0ae0" />
      <path d="M1141 532L1200 577" stroke="#b02840" strokeWidth="1.600" />
      <path d="M1076 504l14-8-1 11-15 9z" fill="#a83240" />
      <path d="M1178 507l10-3v22l-10-6z" fill="#3c3cc0" />
      <path d="M1124 585l12 9-12 10-12-10z" fill="#08f035" />
      <path d="M1122 517c3-10 10-13 18-12 10 0 12 9 8 14l-12 9-4-1z" fill="#2be08a" />
      <path d="M1127 516l9-5 9 4-10 6zM1128 522l5 4" fill="#8a7a72" stroke="#156b45" />
      <path d="M1118 511h21v20h-21z" fill="none" stroke="#ecec70" strokeWidth="1.600" />
      <path d="M1069 533h10v10h-10z" fill="none" stroke="#111" strokeWidth="3.500" />
      <path d="M1069 533h10v10h-10z" fill="none" stroke="#fff" strokeWidth="1.300" />
      <path d="M1075 538l11 11h-5l3 7-3 1-3-7-3 4z" fill="#fff" stroke="#222" strokeWidth=".8" />
    </g>
  </svg>
);

const VBar = [
  ["cam", "camL", "camA", "book", "img", "*pan", "brush"],
  ["*grid", "film", "gate", "dim", "chart", "safeA", "safeT"],
  ["wire", "*shade", "half", "*wos", "check", "bulb", "shad"],
  ["ao", "blur", "*msaa", "dark"], ["iso"], ["x1", "x2", "x3"], ["expo"],
];
const VBtn = ({ s }) => {
  const on = s[0] === "*";
  const n = on ? s.slice(1) : s;
  return <button aria-label={n} className={`flex h-[18px] w-[19px] shrink-0 items-center justify-center ${on ? "bg-[#5285a6]" : ""}`}><I16 n={n} className="h-3.5 w-3.5" /></button>;
};
const Viewport = () => (
  <main className="mt-px mb-1 flex min-w-0 grow flex-col border border-[#8a8a8a]">
    <div className="flex h-[22px] shrink-0 items-center gap-[15px] pl-2 text-xs">
      {["视图", "着色", "照明", "显示", "渲染器", "面板"].map((m) => <button key={m}>{m}</button>)}
    </div>
    <div className="flex h-[21px] shrink-0 items-center">
      {VBar.map((g, i) => (
        <React.Fragment key={i}>
          <div className="flex w-[11px] shrink-0 justify-center"><div className="h-4 w-0.5 rounded-full bg-[#777]" /></div>
          {g.map((s) => <VBtn key={s} s={s} />)}
        </React.Fragment>
      ))}
      <Field label="曝光" v="0.00" className="ml-0.5 w-[38px] bg-[#2f2f2f]" />
      <div className="ml-0.5 flex"><VBtn s="gam" /></div>
      <Field label="Gamma" v="1.00" className="ml-0.5 w-[38px] bg-[#2f2f2f]" />
      <div className="ml-0.5 flex"><VBtn s="*on" /></div>
      <div className="relative flex h-[18px] w-[222px] shrink-0 items-center bg-[#555]">
        <select aria-label="视图变换" className="h-full w-full appearance-none bg-transparent pl-1 text-xs outline-none"><option>ACES 1.0 SDR-video (sRGB)</option></select>
        <Tri className="pointer-events-none absolute right-1" />
      </div>
    </div>
    <div className="relative flex grow flex-col overflow-hidden bg-[#5c5c5c]">
      <Scene />
      <div className="relative mt-auto flex items-end">
        <svg viewBox="0 0 34 34" className="mb-2 ml-2 h-[34px] w-[34px] shrink-0 overflow-visible" aria-hidden="true">
          <path d="M17 18V9" stroke="#1fe01f" strokeWidth="1.300" /><path d="M17 18l-8 5" stroke="#2020d0" strokeWidth="1.300" /><path d="M17 18l7 5" stroke="#b01838" strokeWidth="1.300" />
          <text x="14" y="7" fontSize="9" fontWeight="bold" fill="#1fe01f" fontFamily="Liberation Sans, sans-serif">y</text>
          <text x="3" y="25" fontSize="9" fontWeight="bold" fill="#1818d0" fontFamily="Liberation Sans, sans-serif">z</text>
          <text x="24" y="27" fontSize="9" fontWeight="bold" fill="#c01838" fontFamily="Liberation Sans, sans-serif">x</text>
        </svg>
        <div className="mb-1 h-4 grow pr-[90px] text-center text-[11px] font-bold leading-4 text-white">二维平移/缩放: persp</div>
      </div>
    </div>
  </main>
);

const ATTRS = [["平移 X", "0"], ["平移 Y", "0"], ["平移 Z", "0"], ["旋转 X", "0"], ["旋转 Y", "0"], ["旋转 Z", "0"], ["缩放 X", "1"], ["缩放 Y", "1"], ["缩放 Z", "1"], ["可见性", "启用"]];
const mono = "font-['Liberation_Mono','Noto_Sans_CJK_SC',monospace]";
const ChannelBox = () => (
  <section className="ml-2 flex w-[260px] shrink-0 flex-col pl-1">
    <div className="flex h-5 shrink-0 items-center justify-end gap-2 pr-1.5">
      {["manip", "speed", "hyper"].map((n) => <button key={n} aria-label={n}><I16 n={n} className="block h-3.5 w-3.5" /></button>)}
    </div>
    <div className="flex h-7 shrink-0 items-center gap-[15px] pl-[5px] text-xs">
      <button>通道</button><button>编辑</button><button>对象</button><button>显示</button>
    </div>
    <div className={`h-[18px] shrink-0 pl-0.5 text-xs leading-5 font-bold ${mono}`}>pCylinder27</div>
    <table className="w-full shrink-0 border-collapse text-xs">
      <tbody>
        {ATTRS.map(([a, v]) => (
          <tr key={a} className="h-4">
            <th scope="row" className={`p-0 pr-1.5 text-right font-normal leading-4 ${mono}`}>{a}</th>
            <td className="w-[74px] border-b border-[#3a3a3a] bg-[#2d2d2d] p-0 pl-2.5 leading-[15px]">{v}</td>
            <td className="w-2 p-0" />
          </tr>
        ))}
      </tbody>
    </table>
    <div className={`mt-[17px] mr-2 h-4 shrink-0 bg-[#3a3a3a] pl-[18px] text-xs font-bold leading-4 ${mono}`}>pCylinder27Shape</div>
    <div className="mt-3.5 mr-2 h-[178px] shrink-0 bg-[#2b2b2b]" />
    <div className="flex h-4 shrink-0 items-center justify-center"><Grip className="h-1 w-[88px]" /></div>
    <div className="h-5 shrink-0 bg-[#373737]" />
    <div className="mr-1 mb-1 flex min-h-0 grow flex-col border border-[#333] px-1">
      <div className="flex h-[23px] shrink-0 items-center gap-[15px] pl-0.5 text-xs">
        <button>层</button><button>选项</button><button>帮助</button>
      </div>
      <div className="flex h-7 shrink-0 items-start justify-end gap-2.5 pt-1 pr-1">
        {["lUp", "lDn", "lNew", "lSel"].map((n) => <button key={n} aria-label={n}><I16 n={n} className="block h-3.5 w-3.5" /></button>)}
      </div>
      <div className="flex min-h-0 grow flex-col bg-[#2b2b2b]">
        <div className="flex h-5 shrink-0 items-center bg-[#5285a6] pl-[88px] text-xs text-[#101820]">layer1</div>
        <div className="mt-auto flex h-3 shrink-0 items-center gap-0.5 bg-[#373737]">
          <Tri dir="left" /><div className="h-2.5 w-[62%] rounded-full bg-[#5d5d5d]" /><Tri dir="right" className="ml-auto" />
        </div>
      </div>
    </div>
  </section>
);

const SideTabs = () => (
  <nav className="flex w-5 shrink-0 flex-col bg-[#373737] text-xs leading-5">
    {[["通道盒/层编辑器", "h-[111px] bg-[#444] text-[#eee]"], ["属性编辑器", "mt-0.5 h-[80px] text-[#8a8a8a]"], ["建模工具包", "mt-0.5 h-[82px] text-[#8a8a8a]"]].map(([t, c]) => (
      <button key={t} className={`w-5 [writing-mode:vertical-rl] [text-orientation:sideways] ${c}`}>{t}</button>
    ))}
  </nav>
);

const Row = ({ label, h = "h-[25px]", children }) => (
  <div className={`flex shrink-0 items-center text-xs ${h}`}>
    <div className="mr-2 w-[142px] shrink-0 text-right">{label}</div>
    {children}
  </div>
);
const Heading = ({ children, className = "" }) => (
  <h3 className={`h-6 shrink-0 rounded-sm bg-[#5b5b5b] pl-[11px] text-xs font-bold leading-6 ${className}`}>{children}</h3>
);
const Check = ({ label, on }) => (
  <span className="relative flex h-[13px] w-[13px]">
    <input type="checkbox" aria-label={label} defaultChecked={on} className="h-[13px] w-[13px] appearance-none bg-[#2b2b2b]" />
    {on && <svg viewBox="0 0 12 12" className="pointer-events-none absolute h-[13px] w-[13px]"><path d="M2 6.500l3 3L10.500 2" fill="none" stroke="#e6e6e6" strokeWidth="1.800" /></svg>}
  </span>
);
const Radio = ({ name, label, on, className = "" }) => (
  <label className={`flex items-center gap-2 ${className}`}>
    <input type="radio" name={name} defaultChecked={on} className="h-2.5 w-2.5 appearance-none rounded-full border-2 border-[#353535] bg-[#2f2f2f] checked:bg-[#dcdcdc]" />
    {label}
  </label>
);
const DIn = ({ label, v, off }) => (
  <input aria-label={label} defaultValue={v} disabled={off} className={`h-[21px] w-[68px] rounded-sm pl-[5px] text-xs outline-none ${off ? "bg-[#444] text-[#6a6a6a]" : "bg-[#2b2b2b] text-[#d4d4d4]"}`} />
);

const Dialog = () => (
  <div role="dialog" aria-label="镜像选项" className="absolute top-[224px] right-[186px] flex h-[530px] w-[546px] flex-col border-b border-[#333] bg-[#444] shadow-[0_0_2px_#222]">
    <div className="flex h-[30px] shrink-0 items-center bg-white pl-[9px] text-black">
      <Maya className="h-3.5 w-3.5" />
      <h2 className="ml-1.5 text-xs">镜像选项</h2>
      <div className="ml-auto flex h-full">
        <button aria-label="最小化" className="flex w-[46px] items-center justify-center"><svg viewBox="0 0 10 10" className="h-2.5 w-2.5"><path d="M0 5.500h10" stroke="#000" /></svg></button>
        <button aria-label="最大化" className="flex w-[46px] items-center justify-center"><svg viewBox="0 0 10 10" className="h-2.5 w-2.5"><path d="M.5.5h9v9h-9z" fill="none" stroke="#000" /></svg></button>
        <button aria-label="关闭对话框" className="flex w-[46px] items-center justify-center"><svg viewBox="0 0 10 10" className="h-2.5 w-2.5"><path d="M0 0l10 10M10 0L0 10" stroke="#000" /></svg></button>
      </div>
    </div>
    <div className="flex h-[26px] shrink-0 items-center gap-[15px] pl-[9px] text-xs"><button>编辑</button><button>帮助</button></div>
    <div className="mx-1 flex min-h-0 grow border border-[#333] bg-[#494949] pl-[7px]">
      <div className="flex min-w-0 grow flex-col overflow-hidden pt-2.5">
        <Heading>镜像设置</Heading>
        <div className="h-[5px] shrink-0" />
        <Row h="h-[19px]" label="切割几何体:"><Check label="切割几何体" /></Row>
        <Row label="几何体类型:"><Sel label="几何体类型" options={["复制"]} className="ml-0.5 w-[68px]" /></Row>
        <Row label="镜像轴位置:"><Sel label="镜像轴位置" options={["世界"]} text="text-white" className="ml-0.5 w-[79px]" /></Row>
        <Row label="偏移:"><DIn label="偏移" v="0.0000" /></Row>
        <Row label="镜像轴:">
          <Radio name="axis" label="X" on className="w-[72px]" /><Radio name="axis" label="Y" className="w-[72px]" /><Radio name="axis" label="Z" />
        </Row>
        <Row label="镜像方向:"><Sel label="镜像方向" options={["-"]} className="ml-0.5 w-[52px]" /></Row>
        <Heading className="mt-2">合并设置</Heading>
        <div className="h-[5px] shrink-0" />
        <Row h="h-[19px]" label="与原始对象组合:"><Check label="与原始对象组合" on /></Row>
        <Row label="边界:"><Sel label="边界" options={["合并边界顶点"]} className="ml-0.5 w-[116px]" /></Row>
        <Row label="合并阈值:"><Radio name="thr" label="自动" on /></Row>
        <Row h="h-[21px]" label=""><Radio name="thr" label="自定义:" /></Row>
        <Row label=""><DIn label="自定义阈值" v="0.0010" off /></Row>
        <Row label="平滑角度:"><DIn label="平滑角度" v="30.0000" /></Row>
        <Heading className="mt-2">UV 设置</Heading>
        <div className="h-[5px] shrink-0" />
        <Row h="h-[19px]" label="翻转 UV:"><Check label="翻转 UV" /></Row>
        <Row label="方向:"><Sel label="方向" options={["局部 U 向"]} className="ml-0.5 w-[95px]" /></Row>
      </div>
      <div className="mr-1 ml-1 flex w-3 shrink-0 flex-col items-center pt-[3px]">
        <Tri dir="up" /><div className="mt-[3px] h-[376px] w-2.5 shrink-0 rounded bg-[#606060]" /><Tri className="mt-auto mb-0.5" />
      </div>
    </div>
    <div className="mx-1.5 mt-2.5 mb-1 flex h-[26px] shrink-0 gap-1 text-xs text-[#e0e0e0]">
      {["镜像", "应用", "关闭"].map((b) => <button key={b} className="grow basis-0 bg-[#5d5d5d]">{b}</button>)}
    </div>
  </div>
);

const MiniWindow = () => (
  <div className="absolute top-[732px] left-1.5 flex w-[52px] flex-col bg-white">
    <div className="flex h-[26px] items-center pl-[3px] text-xs text-[#999]">Poi...<div className="ml-auto h-5 w-[19px] self-start bg-[#e4e4e4]" /></div>
    <button className="mx-px mb-px h-[25px] border-2 border-[#1f77c4] bg-[#e2e2e2] text-xs text-black">开始</button>
  </div>
);

const Watermark = () => (
  <div className="pointer-events-none absolute bottom-2 left-1.5 flex items-center gap-2">
    <svg viewBox="0 0 44 44" className="h-11 w-11 overflow-visible" aria-hidden="true"><path fillRule="evenodd" d="M11 0h26q7 0 7 7v26q0 7-7 7H11q-6 0-6-7V7q0-7 6-7zM17 8v20l18-10z" fill="#a8a8a8" opacity=".6" /><path d="M0 15h9l7 12 7-12h9v28h-8V29l-8 12-8-12v14H0z" fill="#38b8a8" /><path d="M0 15h9l7 12-4 6z" fill="#9adfd6" /></svg>
    <span className="font-['DejaVu_Sans','Noto_Sans',sans-serif] text-[30px] font-bold leading-10 text-white/40">tafe.cc</span>
  </div>
);

export default function App() {
  return (
    <div className="relative flex h-screen w-full flex-col overflow-hidden bg-[#444] font-['Noto_Sans','Noto_Sans_CJK_SC',sans-serif] text-[#c4c4c4]">
      <Title />
      <MenuBar />
      <StatusLine />
      <Shelf />
      <div className="mt-[3px] flex min-h-0 grow">
        <ToolBox />
        <Outliner />
        <Viewport />
        <ChannelBox />
        <SideTabs />
      </div>
      <Dialog />
      <MiniWindow />
      <Watermark />
    </div>
  );
}
